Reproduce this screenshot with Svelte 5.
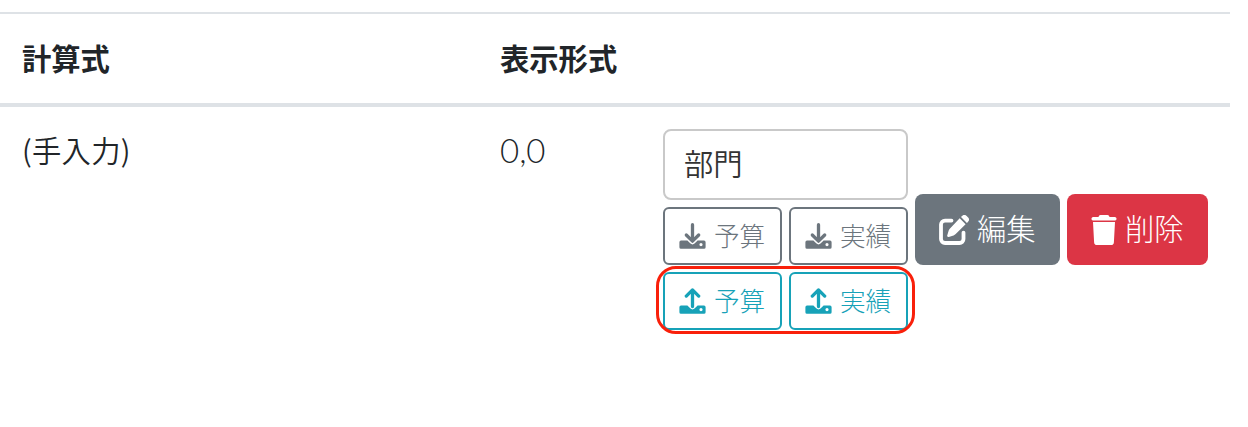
<script lang="ts">
  type Transfer = { label: string };

  const targets: Transfer[] = [{ label: '予算' }, { label: '実績' }];
  const row = { formula: '(手入力)', format: '0,0', unit: '部門' };
</script>

{#snippet driveIcon(up: boolean)}
  <svg class="drive-icon" viewBox="0 0 27 27" aria-hidden="true">
    <path class="drive" fill-rule="evenodd" d="M2 17.6h6.400l2.800 2.700a3.300 3.300 0 0 0 4.600 0l2.800-2.700H25a1.600 1.600 0 0 1 1.600 1.600V24.200a1.600 1.600 0 0 1-1.600 1.600H2A1.600 1.600 0 0 1 .4 24.200v-5A1.600 1.600 0 0 1 2 17.600zM22 20a1.600 1.600 0 1 0 0 3.200a1.600 1.600 0 0 0 0-3.200z" />
    {#if up}
      <path class="arrow" d="M13.500 18.600V1.900M7.300 8.100l6.200-6.200 6.200 6.200" />
    {:else}
      <path class="arrow" d="M13.500 1.700v16.400M7.300 12l6.200 6.200 6.200-6.200" />
    {/if}
  </svg>
{/snippet}

<div class="table">
  <div class="row head">
    <div class="cell">計算式</div>
    <div class="cell format">表示形式</div>
    <div class="cell"></div>
  </div>
  <div class="row body">
    <div class="cell formula">{row.formula}</div>
    <div class="cell format number">{row.format}</div>
    <div class="actions">
      <div class="transfer">
        <div class="unit">{row.unit}</div>
        <div class="pair">
          {#each targets as target}
            <button class="btn-sm download" type="button">{@render driveIcon(false)}<span>{target.label}</span></button>
          {/each}
        </div>
        <div class="pair marked">
          {#each targets as target}
            <button class="btn-sm upload" type="button">{@render driveIcon(true)}<span>{target.label}</span></button>
          {/each}
        </div>
      </div>
      <button class="btn edit" type="button">
        <svg viewBox="0 0 30 30" aria-hidden="true">
          <path class="frame" d="M12.500 5.600H6a4 4 0 0 0-4 4V24a4 4 0 0 0 4 4h14.500a4 4 0 0 0 4-4v-6.400" />
          <path d="M20.700 3.300l5.900 5.900L16.700 19.100c-.6.6-1.300 1-2.100 1.300l-4.900 1.500c-1 .3-1.800-.6-1.500-1.500l1.500-4.900c.2-.8.7-1.500 1.300-2.100zM22 2l1-1a3.300 3.300 0 0 1 4.700 0l1.200 1.200a3.300 3.300 0 0 1 0 4.700l-1 1z" />
        </svg>
        <span>編集</span>
      </button>
      <button class="btn delete" type="button">
        <svg viewBox="0 0 26 30" aria-hidden="true">
          <path d="M7.900 1.100A2 2 0 0 1 9.600 0h6.800a2 2 0 0 1 1.700 1.100l.4.800h5.600a1.900 1.900 0 0 1 0 3.700H1.900a1.900 1.900 0 0 1 0-3.700h5.600z" />
          <path d="M2 7.100h22l-1.100 20.100A2.900 2.900 0 0 1 20 30H6a2.900 2.900 0 0 1-2.900-2.800z" />
        </svg>
        <span>削除</span>
      </button>
    </div>
  </div>
</div>

<style>
:global(body) {
  margin: 0;
  background: #fff;
}

.table {
  box-sizing: border-box;
  width: 1230px;
  min-height: 427px;
  padding-top: 12px;
  color: #212529;
  font-family: "Noto Sans CJK JP", sans-serif;
  font-size: 29.3px;
  font-weight: 350;
  line-height: 44px;
}

.row {
  display: grid;
  grid-template-columns: 477px 163px 1fr;
}

.head {
  box-sizing: border-box;
  height: 95px;
  padding-top: 21px;
  border-top: 2px solid #dee2e6;
  border-bottom: 4px solid #dee2e6;
  font-weight: 700;
}

.body {
  padding-top: 22px;
}

.cell {
  padding-left: 22px;
}

.formula {
  margin-top: -2px;
  letter-spacing: 0.3px;
}

.format {
  padding-left: 23px;
}

.number {
  margin-top: -1px;
  font-family: Lato, sans-serif;
  font-size: 33px;
  font-weight: 300;
}

.actions {
  display: flex;
  align-items: flex-start;
  padding-left: 23px;
}

.transfer {
  width: 245px;
}

.unit {
  box-sizing: border-box;
  height: 71px;
  padding: 9px 19px;
  border: 2px solid #c9c9c9;
  border-radius: 8px;
  color: #333;
}

.pair {
  display: flex;
  gap: 7px;
  margin-top: 7px;
}

/* Ring drawn around the two upload buttons */
.marked {
  position: relative;
}

.marked::after {
  content: "";
  position: absolute;
  inset: -6px -7px -4px -7px;
  border: 3px solid #f9200b;
  border-radius: 20px;
  pointer-events: none;
}

button {
  display: flex;
  align-items: center;
  box-sizing: border-box;
  margin: 0;
  font: inherit;
  font-weight: 300;
}

.btn-sm {
  width: 119px;
  height: 58px;
  padding: 0 0 0 14px;
  gap: 8px;
  background: #fff;
  border: 2px solid currentColor;
  border-radius: 6px;
  font-size: 25.6px;
}

.btn-sm span {
  padding-bottom: 2px;
}

.download {
  color: #6c757d;
}

.upload {
  color: #17a2b8;
}

.drive-icon {
  flex: none;
  width: 27px;
  height: 27px;
}

.drive {
  fill: currentColor;
}

.arrow {
  fill: none;
  stroke: currentColor;
  stroke-width: 3.3;
  stroke-linecap: round;
  stroke-linejoin: round;
}

.btn {
  height: 71px;
  margin-top: 65px;
  margin-left: 7px;
  border: 0;
  border-radius: 8px;
  color: #fff;
}

.btn span {
  padding-bottom: 5px;
}

.btn svg {
  flex: none;
  height: 30px;
  fill: currentColor;
}

.edit {
  width: 145px;
  padding: 0 0 0 24px;
  gap: 8px;
  background: #6c757d;
}

.edit svg {
  width: 30px;
}

.edit .frame {
  fill: none;
  stroke: currentColor;
  stroke-width: 3.8;
  stroke-linecap: round;
}

.delete {
  width: 141px;
  padding: 0 0 0 24px;
  gap: 8px;
  background: #dc3545;
}

.delete svg {
  width: 26px;
}
</style>
